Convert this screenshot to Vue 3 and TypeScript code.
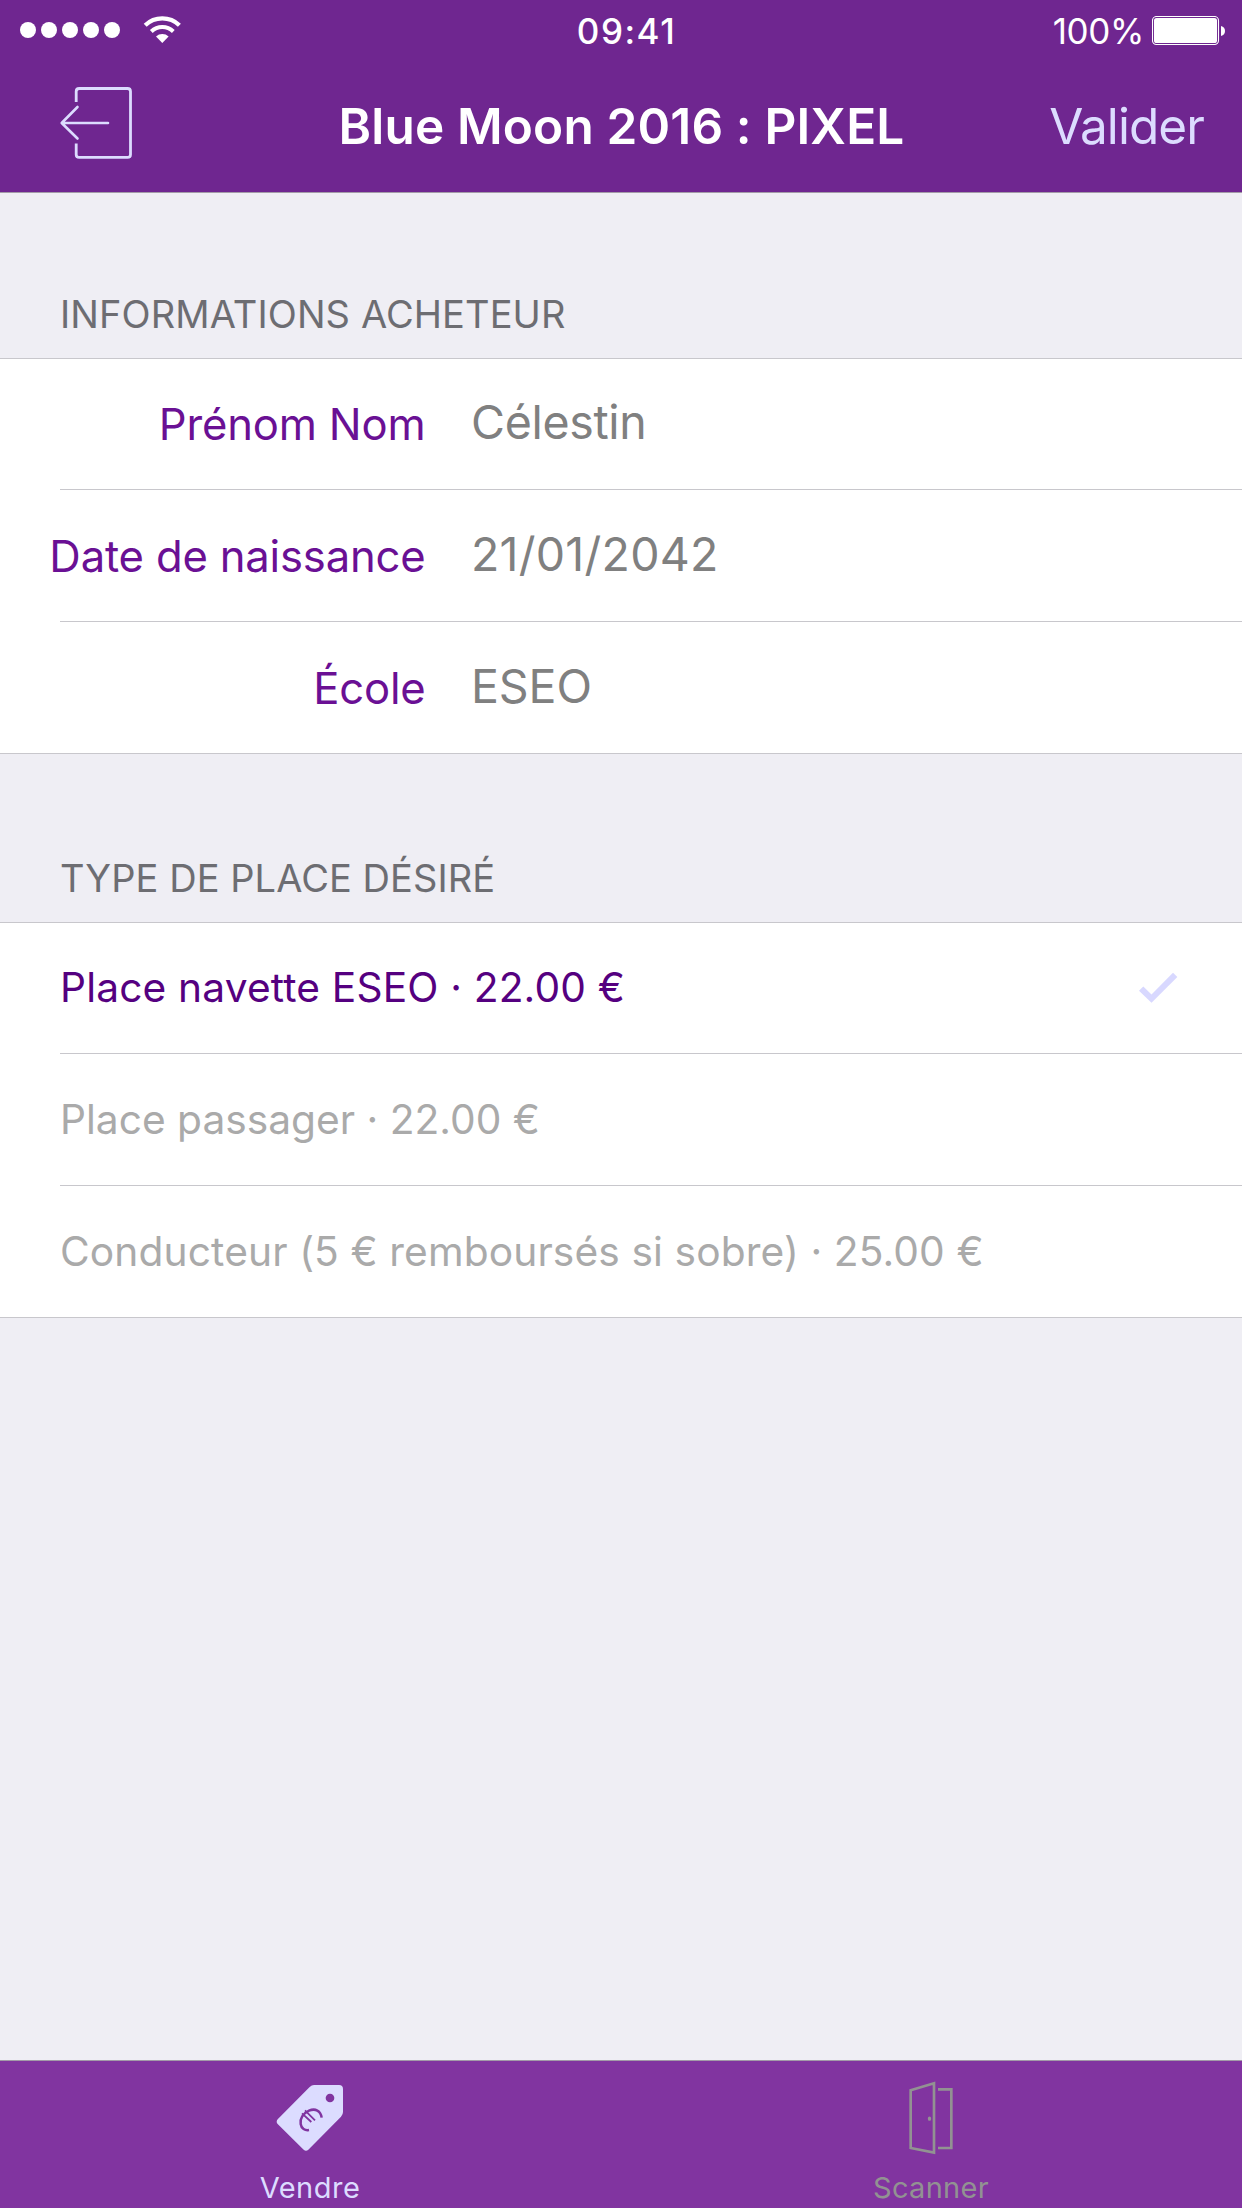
<script setup lang="ts">
import { ref } from 'vue'

interface Field {
  label: string
  value: string
  spacing: string
}

interface Option {
  id: string
  text: string
  spacing: string
}

const fields: Field[] = [
  { label: 'Prénom Nom', value: 'Célestin', spacing: '-0.31px' },
  { label: 'Date de naissance', value: '21/01/2042', spacing: '0.25px' },
  { label: 'École', value: 'ESEO', spacing: '-0.1px' },
]

const options: Option[] = [
  { id: 'navette', text: 'Place navette ESEO · 22.00 €', spacing: '0.16px' },
  { id: 'passager', text: 'Place passager · 22.00 €', spacing: '0' },
  { id: 'conducteur', text: 'Conducteur (5 € remboursés si sobre) · 25.00 €', spacing: '0.12px' },
]

const selected = ref('navette')
const tab = ref<'vendre' | 'scanner'>('vendre')
</script>

<template>
  <div class="screen">
    <header class="top">
      <div class="status">
        <div class="status-left">
          <div class="dots"><i v-for="n in 5" :key="n" /></div>
          <svg class="wifi" width="40" height="30" viewBox="0 0 40 30">
            <g fill="none" stroke="#fff">
              <path d="M3.2 10.2A24.8 24.8 0 0 1 37.4 10.2" stroke-width="4.3" />
              <path d="M9.3 16.5A16 16 0 0 1 31.3 16.5" stroke-width="4" />
            </g>
            <path d="M20.3 28L14 21.4A9.3 9.3 0 0 1 26.6 21.4Z" fill="#fff" />
          </svg>
        </div>
        <div class="clock">09:41</div>
        <div class="status-right">
          <span class="percent">100%</span>
          <svg class="battery" width="74" height="30" viewBox="0 0 74 30">
            <rect x="0.5" y="0.5" width="66" height="28" rx="4" fill="none" stroke="#fff" stroke-width="1.1" />
            <rect x="2" y="2" width="63" height="25" rx="2.6" fill="#fff" />
            <path d="M69 10Q73 11 73 15T69 20Z" fill="#fff" />
          </svg>
        </div>
      </div>
      <nav class="nav">
        <button class="exit" aria-label="Quitter">
          <svg width="76" height="76" viewBox="0 0 76 76" fill="none" stroke="#dcdcff" stroke-width="2.8">
            <path d="M18.2 18V7.5Q18.2 4.5 21.2 4.5H69.5Q72.5 4.5 72.5 7.5V70.4Q72.5 73.4 69.5 73.4H21.2Q18.2 73.4 18.2 70.4V59.5" />
            <path d="M50 39H4M19.5 23L3.7 39L19.5 54.5" stroke-width="2.6" stroke-linecap="round" stroke-linejoin="round" />
          </svg>
        </button>
        <h1>Blue Moon 2016 : PIXEL</h1>
        <button class="validate">Valider</button>
      </nav>
    </header>

    <main>
      <h2 class="buyer">INFORMATIONS ACHETEUR</h2>
      <section class="list">
        <template v-for="(f, i) in fields" :key="f.label">
          <hr v-if="i">
          <div class="row">
            <label>{{ f.label }}</label>
            <span class="value" :style="{ letterSpacing: f.spacing }">{{ f.value }}</span>
          </div>
        </template>
      </section>

      <h2 class="kind">TYPE DE PLACE DÉSIRÉ</h2>
      <section class="list">
        <template v-for="(o, i) in options" :key="o.id">
          <hr v-if="i">
          <div class="row option" :class="{ chosen: selected === o.id }" @click="selected = o.id">
            <span :style="{ letterSpacing: o.spacing }">{{ o.text }}</span>
            <svg v-if="selected === o.id" class="check" width="40" height="32" viewBox="0 0 40 32">
              <path d="M1 19.7L5.3 15.4L13.5 23.4L35 1.7L39.3 6L13.5 31.7Z" fill="#d8d8ff" />
            </svg>
          </div>
        </template>
      </section>
    </main>

    <footer class="tabs">
      <button class="tab" :class="{ active: tab === 'vendre' }" @click="tab = 'vendre'">
        <svg width="68" height="84" viewBox="169 78 204 252">
          <path d="M283 105H358Q370 105 370 117V186Q370 194 364 200L266 299Q259 305 252 299L174 222Q168 215 174 208L270 111Q276 105 283 105Z" fill="#dcdcff" />
          <circle cx="331" cy="144" r="13" fill="#8134a0" />
          <g fill="none" stroke="#8134a0">
            <path d="M306 203C303 182 287 174 268 182C250 190 240 207 243 222C245 236 256 242 268 240" stroke-width="7.5" />
            <path d="M247 190L275 216M256 181L286 211" stroke-width="5.5" />
          </g>
        </svg>
        <span class="sell">Vendre</span>
      </button>
      <button class="tab" :class="{ active: tab === 'scanner' }" @click="tab = 'scanner'">
        <svg width="62" height="84" viewBox="0 0 186 252">
          <g fill="none" stroke="#929292" stroke-width="8">
            <path d="M32 43L102 22V230L32 216Z" />
            <path d="M114 40H154V216H114" />
          </g>
          <ellipse cx="88.5" cy="128" rx="5" ry="6.5" fill="#929292" />
        </svg>
        <span class="scan">Scanner</span>
      </button>
    </footer>
  </div>
</template>

<style>
body {
  margin: 0;
}
</style>

<style scoped>
.screen {
  display: flex;
  flex-direction: column;
  width: 1242px;
  height: 2208px;
  overflow: hidden;
  background: #efeef4;
  font-family: Inter, "Liberation Sans", sans-serif;
  white-space: nowrap;
}

button {
  margin: 0;
  padding: 0;
  border: 0;
  background: none;
  font: inherit;
  color: inherit;
}

svg {
  display: block;
}

.top {
  flex: none;
  height: 192px;
  background: #6f2690;
  border-bottom: 1px solid #a39ba8;
  color: #fff;
}

.status {
  display: grid;
  grid-template-columns: 1fr auto 1fr;
  height: 60px;
  font-size: 35px;
  line-height: 62px;
}

.status-left {
  display: flex;
  align-items: flex-start;
  padding-left: 20px;
}

.dots {
  display: flex;
  gap: 5px;
  margin-top: 22px;
}

.dots i {
  width: 16px;
  height: 16px;
  border-radius: 50%;
  background: #fff;
}

.wifi {
  margin: 15px 0 0 22px;
}

.clock {
  padding-left: 11px;
  font-weight: 500;
  letter-spacing: 1.5px;
}

.status-right {
  display: flex;
  justify-content: flex-end;
  align-items: flex-start;
  padding-right: 16px;
}

.percent {
  letter-spacing: -0.36px;
}

.battery {
  margin: 16px 0 0 8px;
}

.nav {
  display: grid;
  grid-template-columns: 1fr auto 1fr;
  align-items: center;
  height: 132px;
  font-size: 49.5px;
  line-height: 60px;
}

.exit {
  justify-self: start;
  margin: -9px 0 0 58px;
}

h1 {
  margin: 0;
  padding-left: 1px;
  font-size: 49.5px;
  font-weight: 600;
  letter-spacing: 0.158px;
}

.validate {
  justify-self: end;
  margin-right: 38px;
  color: #dcdcff;
  letter-spacing: -0.93px;
}

main {
  flex: 1;
}

h2 {
  display: flex;
  align-items: flex-end;
  box-sizing: border-box;
  margin: 0;
  padding: 0 60px 25px;
  color: #6d6d72;
  font-size: 38px;
  font-weight: 400;
  line-height: 38px;
}

.buyer {
  height: 165px;
  letter-spacing: 0.1px;
}

.kind {
  height: 168px;
  letter-spacing: 0.06px;
}

.list {
  background: #fff;
  border-top: 1px solid #c8c7cc;
  border-bottom: 1px solid #c8c7cc;
}

hr {
  height: 1px;
  margin: 0 0 0 60px;
  border: 0;
  background: #c8c7cc;
}

.row {
  display: flex;
  align-items: center;
  height: 131px;
}

.row:first-child {
  height: 130px;
}

label {
  display: flex;
  justify-content: flex-end;
  width: 425.5px;
  color: #6a1094;
  font-size: 43.6px;
  letter-spacing: -0.18px;
}

.row:not(:first-child) label {
  padding-top: 1px;
}

.value {
  margin: -4px 0 0 45.5px;
  color: #808080;
  font-size: 46.5px;
}

.option {
  justify-content: space-between;
  padding: 0 64px 0 60px;
  color: #aaa;
  font-size: 40.7px;
}

.option:first-child {
  height: 128px;
  padding-bottom: 2px;
}

.chosen {
  color: #550080;
}

.check {
  width: 40px;
}

.tabs {
  display: flex;
  flex: none;
  height: 147px;
  border-top: 1px solid #a39ba8;
  background: #8134a0;
}

.tab {
  display: flex;
  flex: 1;
  flex-direction: column;
  align-items: center;
  padding: 15px 1px 0 0;
  color: #929292;
  font-size: 29px;
  line-height: 36px;
}

.tab.active {
  color: #dcdcff;
}

.tab span {
  margin-top: 10px;
}

.sell {
  letter-spacing: 0.5px;
}

.scan {
  letter-spacing: 0.3px;
}
</style>
